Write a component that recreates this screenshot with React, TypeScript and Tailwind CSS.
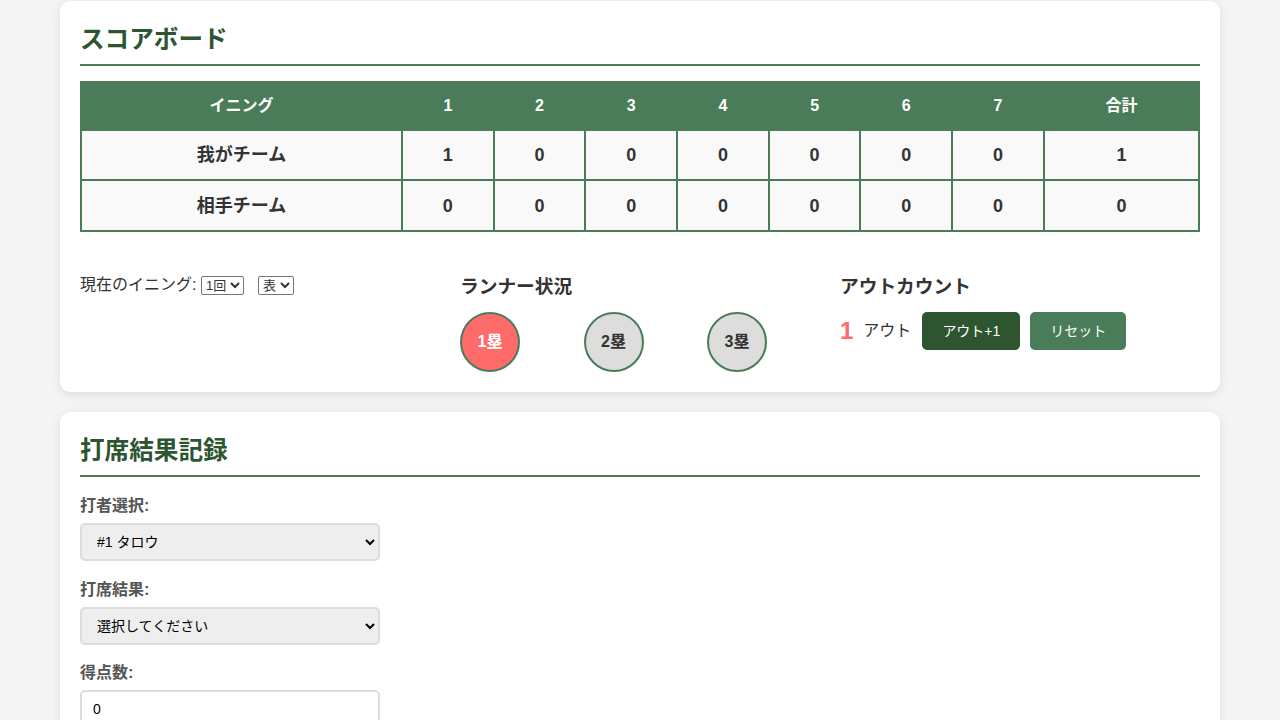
import { useState } from "react";

const FONT = { fontFamily: '"Liberation Sans", "Noto Sans CJK JP", sans-serif' };

const INNINGS = [1, 2, 3, 4, 5, 6, 7];
const TEAMS = [
  { name: "我がチーム", runs: [1, 0, 0, 0, 0, 0, 0] },
  { name: "相手チーム", runs: [0, 0, 0, 0, 0, 0, 0] },
];

function Card({ title, children }: { title: string; children: React.ReactNode }) {
  return (
    <section className="rounded-[10px] bg-white p-5 shadow-[0_2px_10px_rgba(0,0,0,0.1)]">
      <h2 className="mb-[15px] border-b-2 border-[#4a7c59] pb-[5px] text-[24.6px] font-bold leading-[38px] text-[#2c5530]">
        {title}
      </h2>
      {children}
    </section>
  );
}

function Scoreboard() {
  return (
    <table className="w-full table-fixed border-collapse border-2 border-[#4a7c59] text-center">
      <colgroup>
        <col className="w-[321px]" />
        {INNINGS.map((i) => <col key={i} className="w-[91.7px]" />)}
        <col />
      </colgroup>
      <thead>
        <tr className="h-[48px] bg-[#4a7c59] text-[16px] font-bold text-white">
          <th className="border-2 border-[#4a7c59]">イニング</th>
          {INNINGS.map((i) => <th key={i} className="border-2 border-[#4a7c59]">{i}</th>)}
          <th className="border-2 border-[#4a7c59]">合計</th>
        </tr>
      </thead>
      <tbody>
        {TEAMS.map((t, ti) => (
          <tr key={t.name} className={`${ti === 0 ? "h-[50px]" : "h-[51px]"} bg-[#f9f9f9] text-[18px] font-bold text-[#333]`}>
            <td className="border-2 border-[#4a7c59] pt-px">{t.name}</td>
            {t.runs.map((r, i) => <td key={i} className="border-2 border-[#4a7c59] pt-px">{r}</td>)}
            <td className="border-2 border-[#4a7c59] pt-px">{t.runs.reduce((a, b) => a + b, 0)}</td>
          </tr>
        ))}
      </tbody>
    </table>
  );
}

function Base({ label, on }: { label: string; on?: boolean }) {
  return (
    <div className={`flex h-[60px] w-[60px] items-center justify-center rounded-full border-2 border-[#4a7c59] text-[16px] font-bold ${on ? "bg-[#ff6b6b] text-white" : "bg-[#ddd] text-[#333]"}`}>
      {label}
    </div>
  );
}

function GameControls() {
  const [outs, setOuts] = useState(1);
  return (
    <div className="mt-[40px] grid grid-cols-3 gap-5 text-[#333]">
      <div className="text-[16px] leading-[26px]">
        現在のイニング:{" "}
        <select className="h-[19px] rounded-[2px] border border-[#767676] bg-white text-[13px] leading-none">
          <option>1回</option><option>2回</option><option>3回</option>
        </select>
        <select className="ml-[14px] h-[19px] rounded-[2px] border border-[#767676] bg-white text-[13px] leading-none">
          <option>表</option><option>裏</option>
        </select>
      </div>
      <div>
        <h3 className="mb-[10px] text-[18.72px] font-bold leading-[30px]">ランナー状況</h3>
        <div className="flex gap-[63.5px]">
          <Base label="1塁" on />
          <Base label="2塁" />
          <Base label="3塁" />
        </div>
      </div>
      <div>
        <h3 className="mb-[10px] text-[18.72px] font-bold leading-[30px]">アウトカウント</h3>
        <div className="flex h-[38px] items-center">
          <span className="mr-[10px] text-[24px] font-bold text-[#ff6b6b]">{outs}</span>
          <span className="text-[16px]">アウト</span>
          <button onClick={() => setOuts((o) => Math.min(3, o + 1))}
            className="ml-[11px] h-[38px] rounded-[5px] bg-[#2c5530] px-5 text-[14px] text-white">
            アウト+1
          </button>
          <button onClick={() => setOuts(0)}
            className="ml-[10px] h-[38px] rounded-[5px] bg-[#4a7c59] px-5 text-[14px] text-white">
            リセット
          </button>
        </div>
      </div>
    </div>
  );
}

function Field({ label, children }: { label: string; children: React.ReactNode }) {
  return (
    <div className="mb-[15.5px]">
      <label className="mb-[4px] block text-[16px] font-bold leading-[26px] text-[#555]">{label}</label>
      {children}
    </div>
  );
}

const inputCls = "block h-[38px] w-[300px] rounded-[5px] border-2 border-[#ddd] px-[11px] text-[14px] text-black";

function AtBatForm() {
  return (
    <div className="pt-px">
      <Field label="打者選択:">
        <select className={`${inputCls} bg-[#eee]`}>
          <option>#1 タロウ</option>
          <option>#2 ジロウ</option>
        </select>
      </Field>
      <Field label="打席結果:">
        <select className={`${inputCls} bg-[#eee]`}>
          <option>選択してください</option>
          <option>ヒット</option>
        </select>
      </Field>
      <Field label="得点数:">
        <input type="number" defaultValue={0} className={`${inputCls} bg-white`} />
      </Field>
    </div>
  );
}

export default function App() {
  return (
    <div className="min-h-screen bg-[#f4f4f4]" style={FONT}>
      <div className="mx-auto flex w-[1160px] flex-col gap-5 pt-px">
        <Card title="スコアボード">
          <Scoreboard />
          <GameControls />
        </Card>
        <Card title="打席結果記録">
          <AtBatForm />
        </Card>
      </div>
    </div>
  );
}
